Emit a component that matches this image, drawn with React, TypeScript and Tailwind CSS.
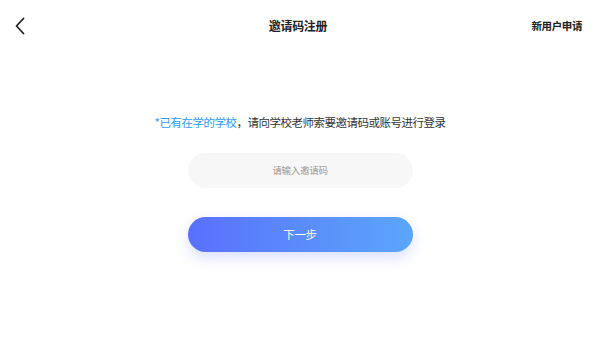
import React from 'react';

const App = () => {
    return (
        <div
            className="w-[600px] h-[360px] bg-white relative overflow-hidden"
            style={{ fontFamily: '"Noto Sans CJK SC", "Noto Sans", sans-serif' }}
        >
            {/* Header */}
            <div className="h-[52px] flex items-center justify-between pl-[14px] pr-[18px]">
                <button className="w-[58px] h-[30px] flex items-center">
                    <svg width="12" height="18" viewBox="0 0 12 18" fill="none">
                        <path d="M9.5 1.5 L2.5 9 L9.5 16.5" stroke="#222" strokeWidth="1.8" strokeLinecap="round" strokeLinejoin="round" />
                    </svg>
                </button>
                <h1 className="text-[12px] font-bold text-[#222] tracking-[-0.3px]">邀请码注册</h1>
                <span className="text-[10.5px] font-bold text-[#222] tracking-[-0.4px] whitespace-nowrap w-[58px] text-right">新用户申请</span>
            </div>

            {/* Body */}
            <div className="flex flex-col items-center pt-[60px]">
                <p className="text-[11.5px] text-[#333] leading-[20px] tracking-[-0.5px] whitespace-nowrap">
                    <span className="text-[#2f9bf0]">*已有在学的学校</span>，请向学校老师索要邀请码或账号进行登录
                </p>

                <div className="mt-[21px] w-[225px] h-[35px] rounded-full bg-[#f7f7f8] flex items-center justify-center">
                    <span className="text-[9.5px] text-[#999] tracking-[-0.3px]">请输入邀请码</span>
                </div>

                <button className="mt-[29px] w-[225px] h-[35px] rounded-full bg-gradient-to-r from-[#5a6ffc] to-[#5ba6fa] shadow-[0_6px_14px_rgba(90,115,250,0.22)] flex items-center justify-center">
                    <span className="text-[11.5px] text-white tracking-[-0.3px]">下一步</span>
                </button>
            </div>
        </div>
    );
};

export default App;
